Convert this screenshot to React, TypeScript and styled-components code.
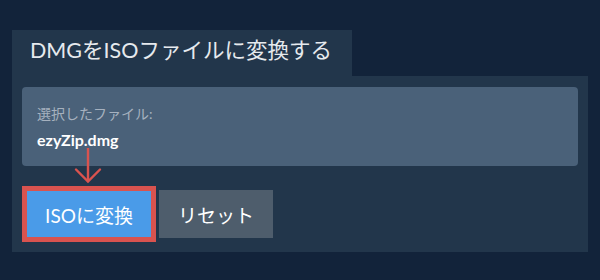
import React from "react";
import styled, { createGlobalStyle } from "styled-components";

const GlobalStyle = createGlobalStyle`
  body {
    margin: 0;
    background-color: #12233a;
    font-family: Lato, "Noto Sans CJK JP", sans-serif;
  }
`;

const WPage = styled.div`
  padding: 30px 12px 0 12px;
  width: 600px;
  height: 280px;
  box-sizing: border-box;
`;

const WTab = styled.div`
  display: inline-block;
  height: 46px;
  line-height: 40px;
  padding: 0 20px 0 18px;
  background-color: #22364b;
  color: #e6eaee;
  font-size: 21.5px;
  vertical-align: top;
`;

const WPanel = styled.div`
  background-color: #22364b;
  padding: 11px 10px 10px 10px;
  position: relative;
`;

const WFileBox = styled.div`
  background-color: #4a6179;
  border-radius: 4px;
  height: 79px;
  box-sizing: border-box;
  padding: 17px 15px 0 15px;
`;

const WFileLabel = styled.div`
  color: #a6b1bf;
  font-size: 14px;
  line-height: 20px;
`;

const WFileName = styled.div`
  margin-top: 6px;
  color: #ffffff;
  font-size: 16px;
  font-weight: bold;
  line-height: 20px;
`;

const WButtonRow = styled.div`
  display: flex;
  align-items: center;
  gap: 3px;
  margin-top: 20px;
`;

const WButton = styled.button<{ $bg: string; $w: number; $h: number; $ring?: boolean }>`
  width: ${(p) => p.$w}px;
  height: ${(p) => p.$h}px;
  box-sizing: border-box;
  background-color: ${(p) => p.$bg};
  border: ${(p) => (p.$ring ? "5px solid #d9534f" : "none")};
  color: #ffffff;
  font-family: Lato, "Noto Sans CJK JP", sans-serif;
  font-size: 19px;
  padding: 0;
  cursor: pointer;
`;

const WArrow = styled.svg`
  position: absolute;
  left: 62px;
  top: 72px;
`;

export default function App() {
  return (
    <>
      <GlobalStyle />
      <WPage>
        <WTab>DMGをISOファイルに変換する</WTab>
        <WPanel>
          <WFileBox>
            <WFileLabel>選択したファイル:</WFileLabel>
            <WFileName>ezyZip.dmg</WFileName>
          </WFileBox>
          <WButtonRow>
            <WButton $bg="#4a9be8" $w={134} $h={56} $ring>
              ISOに変換
            </WButton>
            <WButton $bg="#4e5d6c" $w={114} $h={48}>
              リセット
            </WButton>
          </WButtonRow>
          <WArrow width="28" height="36" viewBox="0 0 28 36">
            <g stroke="#d9534f" strokeWidth="2.4" fill="none" strokeLinecap="round">
              <line x1="14" y1="0" x2="14" y2="33" />
              <polyline points="2,21.5 14,33.5 26,21.5" />
            </g>
          </WArrow>
        </WPanel>
      </WPage>
    </>
  );
}
